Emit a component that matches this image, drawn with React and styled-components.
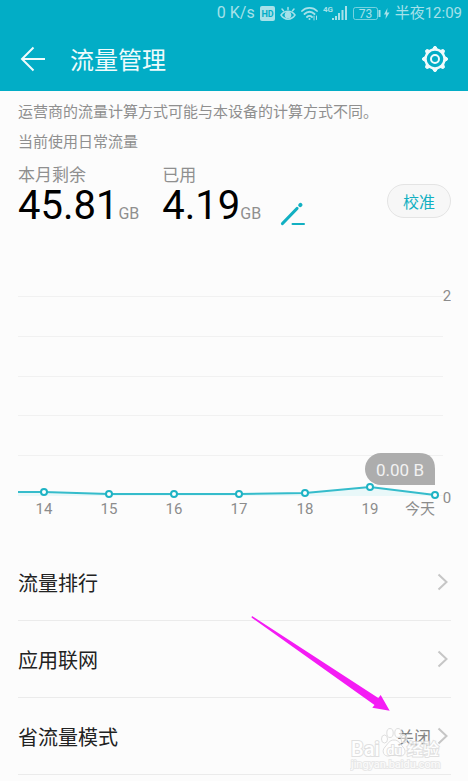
import React from 'react';
import styled, { createGlobalStyle } from 'styled-components';

const GlobalStyle = createGlobalStyle`
  body {
    margin: 0;
    background: #fcfcfc;
    font-family: Roboto, "Noto Sans CJK SC", sans-serif;
  }

  button {
    font-family: inherit;
    cursor: pointer;
  }
`;

const days = [
  { label: '14', x: 26, y: 208 },
  { label: '15', x: 91, y: 210 },
  { label: '16', x: 156, y: 210 },
  { label: '17', x: 221, y: 210 },
  { label: '18', x: 287, y: 209 },
  { label: '19', x: 352, y: 203 },
  { label: '今天', x: 417, y: 211 },
];

const gridLines = [12, 52, 92, 131, 171, 211];

const menu = [
  { title: '流量排行' },
  { title: '应用联网' },
  { title: '省流量模式', value: '关闭' },
];

const StatusIcons = () => (
  <>
    <svg width="15" height="15" viewBox="0 0 15 15">
      <rect width="15" height="15" rx="2" fill="currentColor" />
      <text x="7.5" y="11" fontSize="9" fontWeight="700" textAnchor="middle" fill="#02adc6">HD</text>
    </svg>
    <svg width="16" height="15" viewBox="0 0 16 15" fill="none" stroke="currentColor" strokeWidth="1.5" strokeLinecap="round">
      <path d="M1 9C4.5 4 11.5 4 15 9C11.5 14.5 4.5 14.5 1 9Z" />
      <circle cx="8" cy="9" r="2.6" fill="currentColor" />
      <path d="M8 3.5V1.5M3.5 4.8L2 3M12.5 4.8L14 3" />
    </svg>
    <svg width="17" height="15" viewBox="0 0 17 15" fill="none" stroke="currentColor" strokeWidth="1.8" strokeLinecap="round">
      <path d="M1 5C5 .8 12 .8 16 5M3.500 8C6.500 5 10.500 5 13.500 8M6 11C7.500 9.500 9.500 9.500 11 11" />
      <circle cx="8.5" cy="13" r="1" fill="currentColor" stroke="none" />
      <path d="M13 10V14M15.500 13.500V10" strokeWidth="1" />
    </svg>
    <svg width="25" height="16" viewBox="0 0 25 16" fill="currentColor">
      <text x="0" y="7" fontSize="8" fontWeight="700">4G</text>
      <path d="M9 13h2v2h-2zM12 11h2v4h-2zM15 8h2v7h-2zM18.500 5h2v10h-2zM22 1h2v14h-2z" />
    </svg>
  </>
);

const Battery = () => (
  <svg width="37" height="15" viewBox="0 0 37 15">
    <rect x="0.5" y="1.5" width="24" height="12" rx="2" fill="none" stroke="currentColor" opacity="0.7" />
    <text x="12.5" y="12" fontSize="12" textAnchor="middle" fill="currentColor">73</text>
    <path d="M25.5 4h2v7h-2zM34.500 2L31 8.500H33L32.500 13L36.500 6.500H34Z" fill="currentColor" />
  </svg>
);

const GearIcon = () => (
  <svg width="28" height="28" viewBox="0 0 28 28" fill="none" stroke="currentColor">
    <circle cx="14" cy="14" r="9.5" strokeWidth="2.400" />
    <circle cx="14" cy="14" r="4" strokeWidth="2" />
    {[0, 45, 90, 135, 180, 225, 270, 315].map((angle) => (
      <path key={angle} d="M11.8 4L13 1.600H15L16.200 4Z" fill="currentColor" strokeWidth="1" strokeLinejoin="round" transform={`rotate(${angle} 14 14)`} />
    ))}
  </svg>
);

const Chevron = () => (
  <svg width="12" height="18" viewBox="0 0 12 18" fill="none" stroke="#c6c6c6" strokeWidth="2">
    <path d="M1.5 1.5L9.500 9L1.500 16.500" />
  </svg>
);

const UsageChart = () => {
  const line = ['0,208', ...days.map((d) => `${d.x},${d.y}`)].join(' ');

  return (
    <Chart viewBox="0 0 433 236" role="img" aria-label="日常流量">
      {gridLines.map((y) => (
        <path key={y} d={`M0 ${y + 0.5}H425`} stroke="#f1f1f1" />
      ))}
      <polygon points={`${line} 417,212 0,212`} fill="#e9f8f9" />
      <polyline points={line} fill="none" stroke="#35bccb" strokeWidth="2" />
      {/* bubble for the current day */}
      <path d="M363 169H401Q417 169 417 185V201H363A16 16 0 0 1 363 169Z" fill="#adadad" />
      <text x="382" y="192" fontSize="17" textAnchor="middle" fill="#f2f2f2">0.00 B</text>
      {days.map((d) => (
        <g key={d.label}>
          <circle cx={d.x} cy={d.y} r="3" fill="#fff" stroke="#1fb3c4" strokeWidth="2" />
          <text x={d.label === '今天' ? 402 : d.x} y="230" fontSize="15" textAnchor="middle" fill="#8c8c8c">{d.label}</text>
        </g>
      ))}
      <text x="429" y="17" fontSize="15" textAnchor="middle" fill="#8c8c8c">2</text>
      <text x="429" y="219" fontSize="15" textAnchor="middle" fill="#8c8c8c">0</text>
    </Chart>
  );
};

const App = () => (
  <>
    <GlobalStyle />
    <Header>
      <StatusBar>
        <Speed>0 K/s</Speed>
        <StatusIcons />
        <Battery />
        <Clock>半夜12:09</Clock>
      </StatusBar>
      <TitleBar>
        <IconButton aria-label="返回">
          <svg width="26" height="26" viewBox="0 0 26 26" fill="none" stroke="currentColor" strokeWidth="2">
            <path d="M25 13H2M13.5 1.500L2 13L13.500 24.500" />
          </svg>
        </IconButton>
        <Title>流量管理</Title>
        <IconButton aria-label="设置">
          <GearIcon />
        </IconButton>
      </TitleBar>
    </Header>
    <Main>
      <Notice>运营商的流量计算方式可能与本设备的计算方式不同。</Notice>
      <Notice>当前使用日常流量</Notice>
      <Stats>
        <Stat>
          <StatLabel>本月剩余</StatLabel>
          <StatValue>45.81<Unit>GB</Unit></StatValue>
        </Stat>
        <Stat>
          <StatLabel>已用</StatLabel>
          <StatValue>4.19<Unit>GB</Unit></StatValue>
        </Stat>
        <EditButton aria-label="编辑">
          <svg width="26" height="24" viewBox="0 0 26 24" fill="none" stroke="#12b0c2" strokeLinecap="round">
            <path d="M2.5 21.5L17 6.500" strokeWidth="3.200" />
            <path d="M20.2 3.2L20.500 2.900" strokeWidth="4" />
            <path d="M12.5 22H24" strokeWidth="2" />
          </svg>
        </EditButton>
        <CalibrateButton>校准</CalibrateButton>
      </Stats>
      <UsageChart />
      <List>
        {menu.map((item) => (
          <Row key={item.title}>
            <RowButton>
              <RowTitle>{item.title}</RowTitle>
              {item.value && <RowValue>{item.value}</RowValue>}
              <Chevron />
            </RowButton>
          </Row>
        ))}
        <Pointer width="140" height="98" viewBox="0 0 140 98">
          <path d="M1 1L0.500 2.500L123.500 90L121.300 92.700L138.700 95.700L129.700 80L127.300 83Z" fill="#f41cf4" />
        </Pointer>
        <Watermark width="94" height="48" viewBox="0 0 94 48">
          <g fill="#fff" fillOpacity="0.5" stroke="#dedede">
            <ellipse cx="34.5" cy="13" rx="3" ry="4" />
            <ellipse cx="40" cy="7" rx="3.200" ry="4.500" />
            <ellipse cx="48" cy="7" rx="3.200" ry="4.500" />
            <ellipse cx="54" cy="13" rx="3" ry="4" />
            <path d="M44 14C39 14 38 18 35 21C31 25 34 31 39 30C42 29 46 29 49 30C55 31 57 25 53 21C50 18 49 14 44 14Z" />
          </g>
          <g fill="#fff" stroke="#dadada" paintOrder="stroke" opacity="0.8">
            <text x="1" y="30" fontSize="20" fontWeight="500" strokeWidth="2">Bai</text>
            <text x="37" y="29" fontSize="13" fontWeight="500" strokeWidth="2">du</text>
            <text x="57" y="29" fontSize="16" fontWeight="500" strokeWidth="2">经验</text>
          </g>
          <text x="1" y="42" fontSize="11" fill="#fcfcfc" stroke="#e8e8e8" strokeWidth="2" paintOrder="stroke">jingyan.baidu.com</text>
        </Watermark>
      </List>
    </Main>
  </>
);

const Header = styled.header`
  background: #02adc6;
  color: #f0fbfc;
`;

const StatusBar = styled.div`
  display: flex;
  align-items: center;
  justify-content: flex-end;
  gap: 5px;
  height: 26px;
  padding: 0 6px;
  color: #a6e1e9;
  line-height: 26px;
`;

const Speed = styled.span`
  font-size: 16px;
`;

const Clock = styled.span`
  font-size: 15px;
`;

const TitleBar = styled.div`
  display: flex;
  align-items: center;
  height: 65px;
  padding: 0 19px 0 20px;
`;

const IconButton = styled.button`
  display: flex;
  padding: 0;
  border: 0;
  background: none;
  color: inherit;
`;

const Title = styled.h1`
  flex: 1;
  margin: 0 0 0 24px;
  padding-top: 4px;
  font-size: 24px;
  font-weight: 400;
  line-height: 32px;
`;

const Main = styled.main`
  padding: 6px 17px 6px 18px;
`;

const Notice = styled.p`
  margin: 0;
  color: #8f8f8f;
  font-size: 15px;
  line-height: 30px;
`;

const Stats = styled.section`
  display: flex;
  align-items: flex-end;
  gap: 23px;
  margin-top: 7px;
`;

const Stat = styled.div`
  white-space: nowrap;
`;

const StatLabel = styled.div`
  color: #8f8f8f;
  font-size: 17px;
  line-height: 22px;
`;

const StatValue = styled.div`
  display: flex;
  align-items: baseline;
  color: #000;
  font-size: 40px;
  line-height: 40px;
`;

const Unit = styled.span`
  color: #8f8f8f;
  font-size: 16px;
  line-height: 16px;
`;

const EditButton = styled(IconButton)`
  margin-left: -4px;
`;

const CalibrateButton = styled.button`
  height: 34px;
  margin: 0 0 8px auto;
  padding: 0 15px;
  border: 1px solid #e4e4e4;
  border-radius: 17px;
  background: #f7f7f7;
  color: #12b0c2;
  font-size: 16px;
`;

const Chart = styled.svg`
  display: block;
  width: 100%;
  margin-top: 58px;
`;

const List = styled.ul`
  position: relative;
  margin: 24px 0 0;
  padding: 0;
  list-style: none;
`;

const Row = styled.li`
  border-bottom: 1px solid #ebebeb;
`;

const RowButton = styled.button`
  display: flex;
  align-items: center;
  gap: 6px;
  width: 100%;
  height: 76px;
  padding: 0 2px 0 0;
  border: 0;
  background: none;
  text-align: left;
`;

const RowTitle = styled.span`
  flex: 1;
  color: #222;
  font-size: 20px;
`;

const RowValue = styled.span`
  color: #858585;
  font-size: 17px;
`;

const Pointer = styled.svg`
  position: absolute;
  top: 71px;
  right: 60px;
  pointer-events: none;
`;

const Watermark = styled.svg`
  position: absolute;
  right: 7px;
  bottom: 1px;
  pointer-events: none;
`;

export default App;
